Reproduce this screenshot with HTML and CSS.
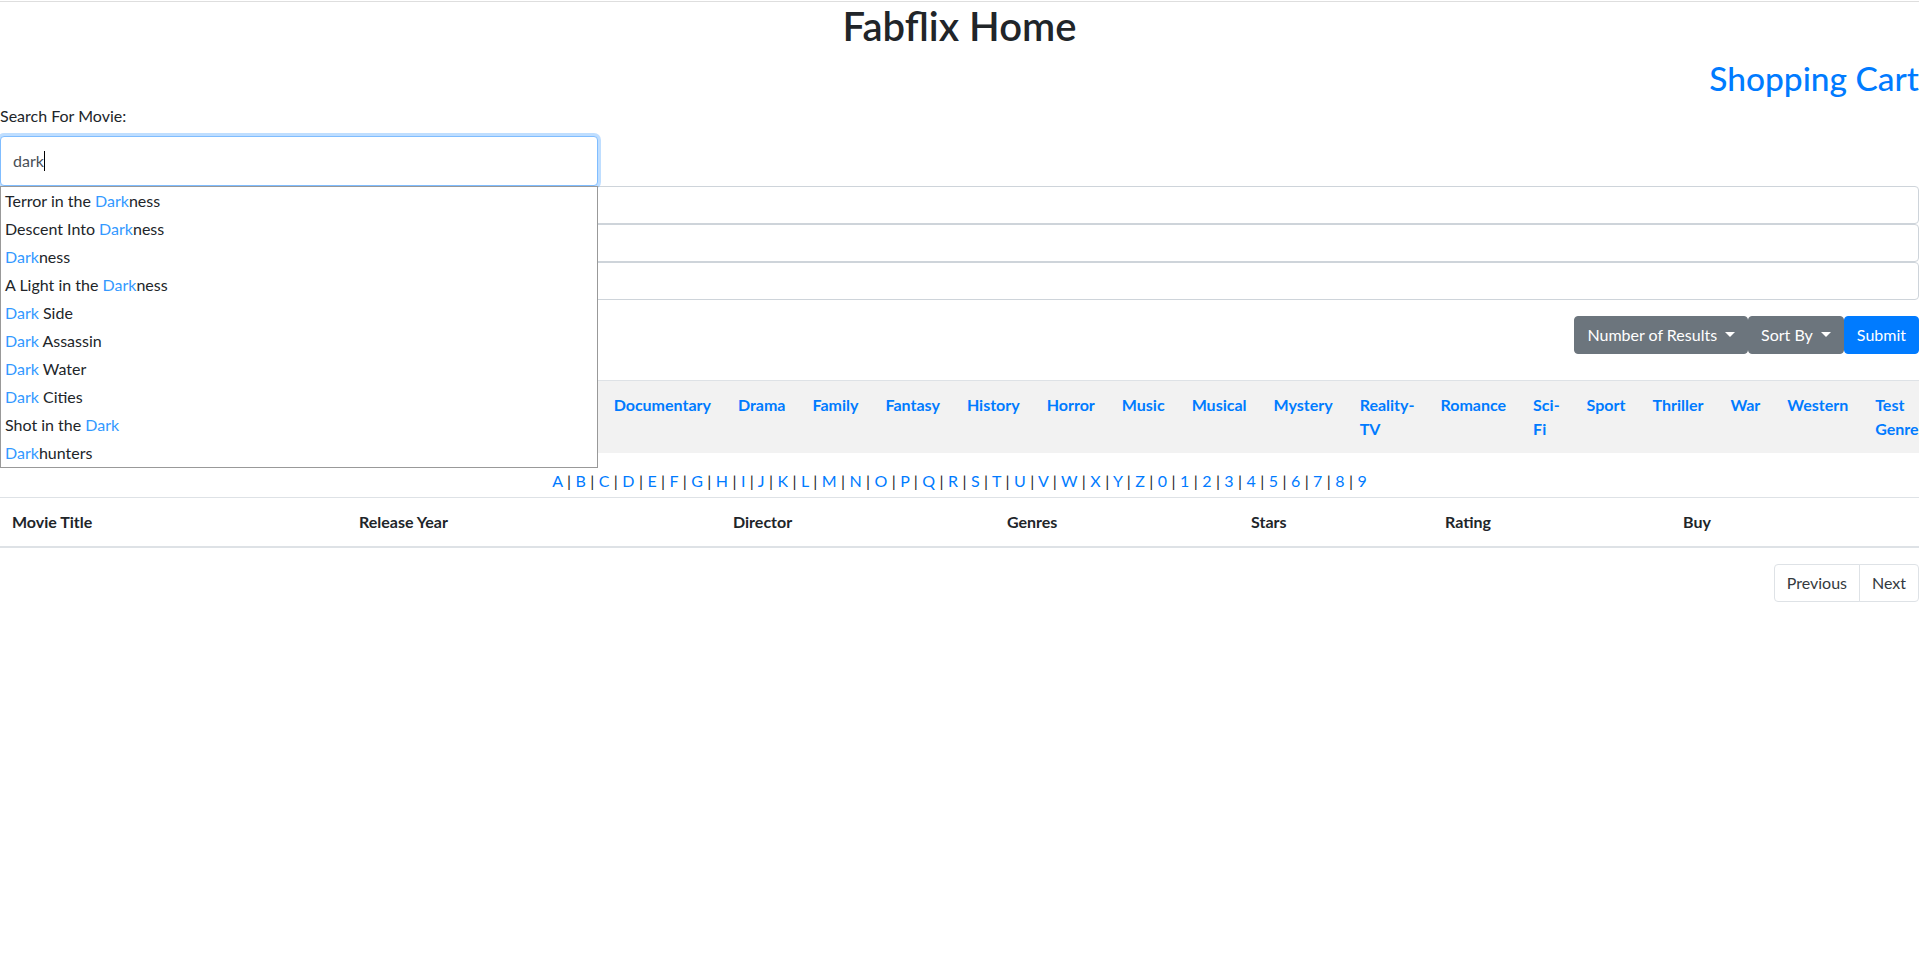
FILE: index.html
```html
<!DOCTYPE html>
<html lang="en">
<head>
<meta charset="utf-8">
<title>Fabflix Home</title>
<link rel="stylesheet" href="styles.css">
</head>
<body>
<div class="page">
  <h1 class="title">Fabflix Home</h1>
  <h2 class="cart"><a href="#">Shopping Cart</a></h2>

  <form class="search-form">
    <label class="search-label">Search For Movie:</label>
    <div class="autocomplete">
      <div class="search-box"><span class="search-text">dark</span><span class="caret"></span></div>
      <div class="suggestions">
        <div class="suggestion">Terror in the <strong>Dark</strong>ness</div>
        <div class="suggestion">Descent Into <strong>Dark</strong>ness</div>
        <div class="suggestion"><strong>Dark</strong>ness</div>
        <div class="suggestion">A Light in the <strong>Dark</strong>ness</div>
        <div class="suggestion"><strong>Dark</strong> Side</div>
        <div class="suggestion"><strong>Dark</strong> Assassin</div>
        <div class="suggestion"><strong>Dark</strong> Water</div>
        <div class="suggestion"><strong>Dark</strong> Cities</div>
        <div class="suggestion">Shot in the <strong>Dark</strong></div>
        <div class="suggestion"><strong>Dark</strong>hunters</div>
      </div>
    </div>
    <input class="form-control" type="text">
    <input class="form-control" type="text">
    <input class="form-control" type="text">
    <div class="actions">
      <button type="button" class="btn btn-secondary dropdown-toggle">Number of Results</button><button type="button" class="btn btn-secondary dropdown-toggle">Sort By</button><button type="submit" class="btn btn-primary">Submit</button>
    </div>
  </form>

  <div class="genre-wrap">
    <table class="genres">
      <tr>
        <td><a href="#">Action</a></td>
        <td><a href="#">Adult</a></td>
        <td><a href="#">Adventure</a></td>
        <td><a href="#">Animation</a></td>
        <td><a href="#">Biography</a></td>
        <td><a href="#">Comedy</a></td>
        <td><a href="#">Crime</a></td>
        <td><a href="#">Documentary</a></td>
        <td><a href="#">Drama</a></td>
        <td><a href="#">Family</a></td>
        <td><a href="#">Fantasy</a></td>
        <td><a href="#">History</a></td>
        <td><a href="#">Horror</a></td>
        <td><a href="#">Music</a></td>
        <td><a href="#">Musical</a></td>
        <td><a href="#">Mystery</a></td>
        <td><a href="#">Reality-TV</a></td>
        <td><a href="#">Romance</a></td>
        <td><a href="#">Sci-Fi</a></td>
        <td><a href="#">Sport</a></td>
        <td><a href="#">Thriller</a></td>
        <td><a href="#">War</a></td>
        <td><a href="#">Western</a></td>
        <td><a href="#">Test Genre</a></td>
      </tr>
    </table>
  </div>

  <div class="letters">
    <a href="#">A</a> | <a href="#">B</a> | <a href="#">C</a> | <a href="#">D</a> | <a href="#">E</a> | <a href="#">F</a> | <a href="#">G</a> | <a href="#">H</a> | <a href="#">I</a> | <a href="#">J</a> | <a href="#">K</a> | <a href="#">L</a> | <a href="#">M</a> | <a href="#">N</a> | <a href="#">O</a> | <a href="#">P</a> | <a href="#">Q</a> | <a href="#">R</a> | <a href="#">S</a> | <a href="#">T</a> | <a href="#">U</a> | <a href="#">V</a> | <a href="#">W</a> | <a href="#">X</a> | <a href="#">Y</a> | <a href="#">Z</a> | <a href="#">0</a> | <a href="#">1</a> | <a href="#">2</a> | <a href="#">3</a> | <a href="#">4</a> | <a href="#">5</a> | <a href="#">6</a> | <a href="#">7</a> | <a href="#">8</a> | <a href="#">9</a>
  </div>

  <table class="movies">
    <thead>
      <tr>
        <th>Movie Title</th>
        <th>Release Year</th>
        <th>Director</th>
        <th>Genres</th>
        <th>Stars</th>
        <th>Rating</th>
        <th>Buy</th>
      </tr>
    </thead>
    <tbody></tbody>
  </table>

  <nav class="pager">
    <a class="page-link" href="#">Previous</a><a class="page-link" href="#">Next</a>
  </nav>
</div>
</body>
</html>
```

FILE: styles.css
```css
* { box-sizing: border-box; }

html, body {
  margin: 0;
  padding: 0;
  overflow-x: hidden;
}

body {
  padding-top: 1px;
  font-family: Lato, "Open Sans", sans-serif;
  font-size: 16px;
  line-height: 1.5;
  color: #212529;
  background: #fff;
}

a { color: #007bff; text-decoration: none; }

.page {
  border-top: 1px solid #dedede;
}

.title {
  margin: 0 0 8px;
  font-size: 40px;
  font-weight: 600;
  line-height: 1.2;
  text-align: center;
}

.cart {
  margin: 0 0 6px;
  font-size: 33.5px;
  font-weight: 500;
  line-height: 40px;
  text-align: right;
}

.search-form {
  margin: 0 0 26px;
}

.search-label {
  display: inline-block;
  margin-bottom: 8px;
}

.autocomplete {
  position: relative;
  width: 598px;
}

.search-box {
  display: flex;
  align-items: center;
  height: 50px;
  padding: 0 12px;
  border: 1px solid #80bdff;
  border-radius: 4px;
  box-shadow: 0 0 0 3px rgba(0, 123, 255, 0.25);
  color: #495057;
  background: #fff;
}

.caret {
  display: inline-block;
  width: 1px;
  height: 20px;
  background: #000;
}

.suggestions {
  position: absolute;
  top: 100%;
  left: 0;
  z-index: 10;
  width: 598px;
  border: 1px solid #999;
  background: #fff;
}

.suggestion {
  padding: 2px 4px;
  white-space: nowrap;
  line-height: 24px;
}

.suggestion strong {
  font-weight: normal;
  color: #3399ff;
}

.form-control {
  display: block;
  width: 100%;
  height: 38px;
  margin: 0;
  padding: 6px 12px;
  font: inherit;
  color: #495057;
  border: 1px solid #ced4da;
  border-radius: 4px;
  background: #fff;
}

.actions {
  display: flex;
  justify-content: flex-end;
  margin-top: 16px;
}

.btn {
  padding: 6px 12px;
  font: inherit;
  line-height: 24px;
  color: #fff;
  border: 1px solid transparent;
  border-radius: 4px;
  cursor: pointer;
}

.btn-secondary { background: #6c757d; border-color: #6c757d; }
.btn-primary { background: #007bff; border-color: #007bff; }

.dropdown-toggle::after {
  content: "";
  display: inline-block;
  margin-left: 0.5em;
  vertical-align: 0.255em;
  border-top: 0.35em solid;
  border-right: 0.35em solid transparent;
  border-left: 0.35em solid transparent;
}

.genre-wrap {
  overflow: hidden;
  margin-bottom: 16px;
  background: #f2f2f2;
  border-top: 1px solid #dee2e6;
}

.genres {
  width: 1px;
  margin-left: 2px;
  border-collapse: collapse;
}

.genres td {
  padding: 12px 13.5px;
  vertical-align: top;
  font-weight: 700;
  line-height: 24px;
}

.letters {
  text-align: center;
  line-height: 24px;
  word-spacing: 0.35px;
  margin-bottom: 4px;
}

.movies {
  width: 100%;
  border-collapse: collapse;
  margin-bottom: 16px;
}

.movies th {
  padding: 12px;
  text-align: left;
  font-weight: 700;
  line-height: 24px;
  border-top: 1px solid #dee2e6;
  border-bottom: 2px solid #dee2e6;
}

.movies th:nth-child(1) { width: 347px; }
.movies th:nth-child(2) { width: 374px; }
.movies th:nth-child(3) { width: 274px; }
.movies th:nth-child(4) { width: 244px; }
.movies th:nth-child(5) { width: 194px; }
.movies th:nth-child(6) { width: 238px; }

.pager {
  display: flex;
  justify-content: flex-end;
}

.page-link {
  display: block;
  padding: 8px 12px;
  line-height: 20px;
  color: #343a40;
  border: 1px solid #dee2e6;
  margin-left: -1px;
}

.page-link:first-child {
  border-radius: 4px 0 0 4px;
}

.page-link:last-child {
  border-radius: 0 4px 4px 0;
}
```
